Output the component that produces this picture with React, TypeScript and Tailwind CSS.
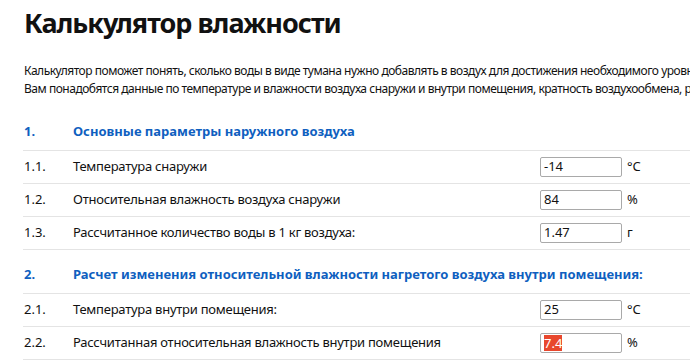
import React from "react";

type Row = { n: string; label: string; value: string; unit: string; selected?: boolean };

const sec1: Row[] = [
  { n: "1.1.", label: "Температура снаружи", value: "-14", unit: "°C" },
  { n: "1.2.", label: "Относительная влажность воздуха снаружи", value: "84", unit: "%" },
  { n: "1.3.", label: "Рассчитанное количество воды в 1 кг воздуха:", value: "1.47", unit: "г" },
];
const sec2: Row[] = [
  { n: "2.1.", label: "Температура внутри помещения:", value: "25", unit: "°C" },
  { n: "2.2.", label: "Рассчитанная относительная влажность внутри помещения", value: "7.4", unit: "%", selected: true },
];

function DataRow({ r }: { r: Row }) {
  return (
    <div className="flex items-center h-[33px] border-b border-[#e4e4e4] text-[13px] text-[#111]">
      <div className="w-[50px] shrink-0 pl-[1px]">{r.n}</div>
      <div className="w-[467px] shrink-0 tracking-[-0.25px] whitespace-nowrap">{r.label}</div>
      <div className="w-[82px] h-[20px] shrink-0 border border-[#a9a9a9] rounded-[2px] flex items-center pl-[3px] text-[13px] bg-white">
        {r.selected ? (
          <span className="bg-[#e8472d] text-white leading-[16px]">{r.value}</span>
        ) : (
          <span>{r.value}</span>
        )}
      </div>
      <div className="pl-[5px] text-[13px]">{r.unit}</div>
    </div>
  );
}

function Header({ n, title, first }: { n: string; title: string; first?: boolean }) {
  return (
    <div
      className={
        "flex items-start h-[44px] pt-[14px] border-b border-[#e4e4e4] text-[13px] leading-[20px] font-bold text-[#0f5fbf]" +
        (first ? " mt-[9px]" : "")
      }
    >
      <div className="w-[50px] shrink-0 pl-[1px]">{n}</div>
      <div className="whitespace-nowrap">{title}</div>
    </div>
  );
}

export default function App() {
  return (
    <div
      className="w-[690px] h-[364px] overflow-hidden bg-white"
      style={{ fontFamily: '"Noto Sans", "Open Sans", sans-serif' }}
    >
      <div className="w-[1000px] pl-[23px]">
        <h1 className="mt-[5px] pl-[1px] text-[27px] leading-[36px] font-bold text-[#111] tracking-[-1px]">
          Калькулятор влажности
        </h1>
        <div className="mt-[21px] pl-[1px] text-[12px] leading-[18px] text-[#111] whitespace-nowrap tracking-[-0.48px]">
          <p>
            Калькулятор поможет понять, сколько воды в виде тумана нужно добавлять в воздух для достижения необходимого уровня влажности.
          </p>
          <p>
            Вам понадобятся данные по температуре и влажности воздуха снаружи и внутри помещения, кратность воздухообмена, размеры помещения.
          </p>
        </div>
        <Header n="1." title="Основные параметры наружного воздуха" first />
        {sec1.map((r) => (
          <DataRow key={r.n} r={r} />
        ))}
        <Header n="2." title="Расчет изменения относительной влажности нагретого воздуха внутри помещения:" />
        {sec2.map((r) => (
          <DataRow key={r.n} r={r} />
        ))}
      </div>
    </div>
  );
}
